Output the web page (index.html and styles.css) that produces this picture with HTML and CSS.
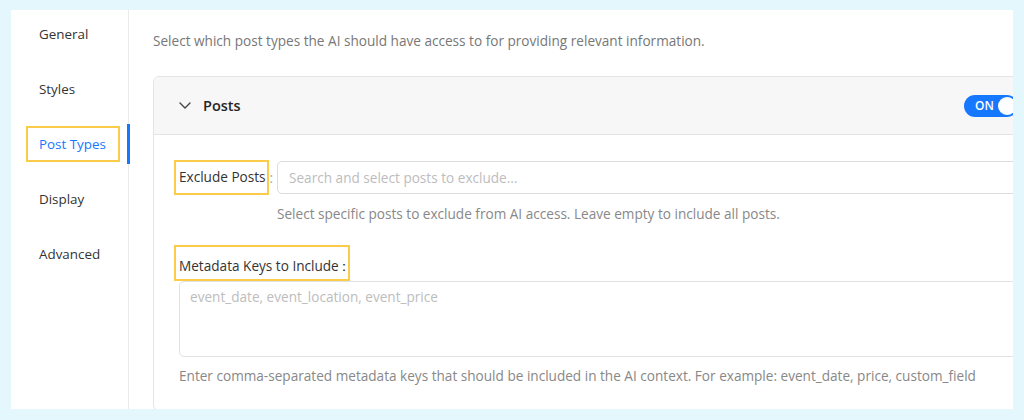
FILE: index.html
```html
<!DOCTYPE html>
<html lang="en">
<head>
<meta charset="utf-8">
<title>Post Types</title>
<link rel="stylesheet" href="styles.css">
</head>
<body>
<div class="panel">
  <nav class="sidebar">
    <div class="nav-item">General</div>
    <div class="nav-item">Styles</div>
    <div class="nav-item active"><span class="mark nav-mark">Post Types</span></div>
    <div class="nav-item">Display</div>
    <div class="nav-item">Advanced</div>
  </nav>
  <main class="content">
    <p class="intro">Select which post types the AI should have access to for providing relevant information.</p>
    <section class="card">
      <header class="card-head">
        <svg class="chevron" width="12" height="7" viewBox="0 0 12 7"><path d="M1 1 L6 6 L11 1" fill="none" stroke="#444" stroke-width="1.4" stroke-linecap="round" stroke-linejoin="round"/></svg>
        <span class="card-title">Posts</span>
        <span class="toggle"><span class="toggle-text">ON</span><span class="knob"></span></span>
      </header>
      <div class="card-body">
        <div class="row">
          <label class="row-label"><span class="mark exclude-mark">Exclude Posts</span><span class="colon">:</span></label>
          <input class="input" type="text" placeholder="Search and select posts to exclude...">
          <p class="help row-help">Select specific posts to exclude from AI access. Leave empty to include all posts.</p>
        </div>
        <div class="stack">
          <label class="mark meta-mark">Metadata Keys to Include<span class="wide-colon">：</span></label>
          <textarea class="textarea" placeholder="event_date, event_location, event_price"></textarea>
          <p class="help stack-help">Enter comma-separated metadata keys that should be included in the AI context. For example: event_date, price, custom_field</p>
        </div>
      </div>
    </section>
  </main>
</div>
</body>
</html>
```

FILE: styles.css
```css
* { box-sizing: border-box; }

body {
  margin: 0;
  background: #e3f7fd;
  font-family: "Open Sans", "Noto Sans", sans-serif;
  color: #333;
}

.panel {
  margin: 10px 11px 0;
  height: 399px;
  background: #fff;
  display: flex;
  overflow: hidden;
}

.sidebar {
  width: 118px;
  flex: none;
  border-right: 1px solid #ebebeb;
  padding-top: 4px;
}

.nav-item {
  position: relative;
  height: 40px;
  margin-bottom: 15px;
  display: flex;
  align-items: center;
  padding-left: 28px;
  font-size: 13.4px;
  line-height: 18px;
  color: #333;
}

.nav-item.active { color: #1677ff; }

.nav-item.active::after {
  content: "";
  position: absolute;
  right: -2px;
  top: 0;
  bottom: 0;
  width: 3px;
  background: #1677ff;
}

.mark {
  display: inline-block;
  border: 2px solid #fbcb4a;
}

.nav-mark {
  margin-left: -13px;
  padding: 7px 12px 7px 11px;
}

.content {
  flex: 1;
  min-width: 0;
  padding: 21px 0 0 24px;
}

.intro {
  margin: 0 0 25px;
  font-size: 13.6px;
  line-height: 20px;
  color: #777;
}

.card {
  border: 1px solid #e4e4e4;
  border-radius: 6px;
  margin-right: -30px;
}

.card-head {
  height: 58px;
  background: #f7f7f7;
  border-bottom: 1px solid #e4e4e4;
  border-radius: 6px 6px 0 0;
  display: flex;
  align-items: center;
  padding: 0 24px 0 25px;
}

.chevron { flex: none; margin-right: 12px; }

.card-title {
  flex: 1;
  font-size: 14.5px;
  font-weight: 600;
  color: #262626;
}

.toggle {
  width: 54px;
  height: 22px;
  border-radius: 11px;
  background: #1677ff;
  display: flex;
  align-items: center;
  justify-content: space-between;
  padding: 0 2px 0 11px;
}

.toggle-text {
  font-size: 12px;
  font-weight: 600;
  color: #fff;
}

.knob {
  width: 18px;
  height: 18px;
  border-radius: 50%;
  background: #fff;
}

.card-body {
  padding: 25px 25px 24px;
}

.row {
  display: grid;
  grid-template-columns: 98px 1fr;
  align-items: center;
}

.row-label {
  display: flex;
  align-items: center;
  font-size: 13.6px;
  line-height: 20px;
  color: #333;
}

.exclude-mark {
  margin-left: -5px;
  padding: 5px 1px 6px 3px;
}

.colon {
  color: #aaa;
  margin-left: 1px;
}

.input {
  height: 33px;
  width: 100%;
  border: 1px solid #dcdcdc;
  border-radius: 5px;
  padding: 0 11px;
  font: 13.6px "Open Sans", "Noto Sans", sans-serif;
  color: #333;
  outline: none;
}

.input::placeholder, .textarea::placeholder { color: #bdbdbd; }

.help {
  margin: 0;
  font-size: 13.6px;
  line-height: 20px;
  color: #888;
}

.row-help {
  grid-column: 2;
  margin-top: 9px;
}

.stack {
  display: flex;
  flex-direction: column;
  align-items: flex-start;
  margin-top: 21px;
}

.meta-mark {
  margin-left: -5px;
  padding: 9px 0 3px 3px;
  font-size: 13.6px;
  line-height: 20px;
  color: #333;
}

.wide-colon {
  display: inline-block;
  margin-left: -2px;
  margin-right: -3px;
}

.textarea {
  display: block;
  width: 100%;
  height: 76px;
  border: 1px solid #e2e2e2;
  border-radius: 5px;
  padding: 5px 10px;
  font: 13.6px/20px "Open Sans", "Noto Sans", sans-serif;
  resize: none;
  outline: none;
}

.stack-help {
  margin-top: 9px;
}
```
